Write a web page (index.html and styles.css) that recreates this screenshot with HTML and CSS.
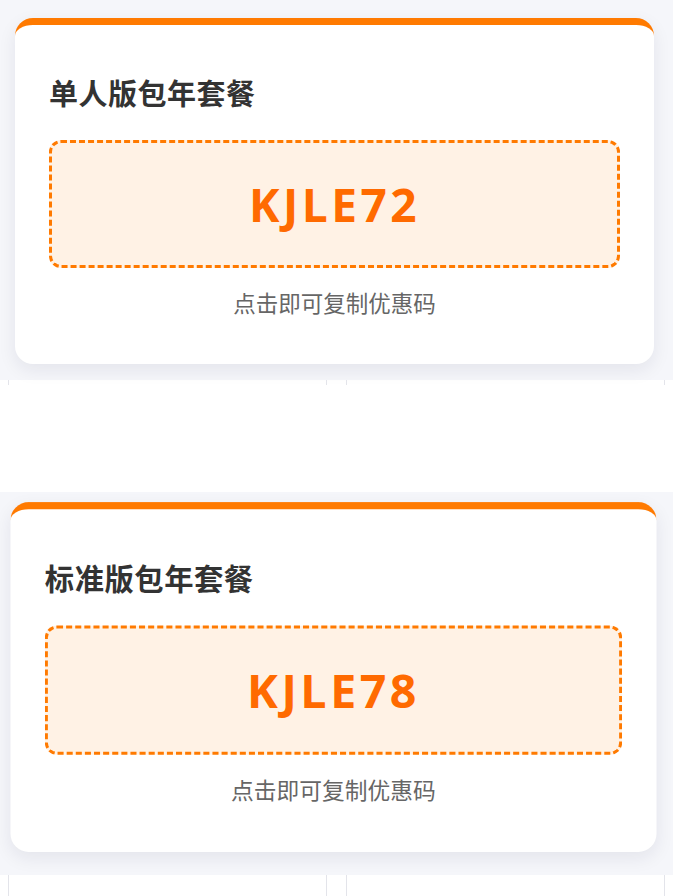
FILE: index.html
```html
<!DOCTYPE html>
<html lang="zh-CN">
<head>
<meta charset="UTF-8">
<meta name="viewport" content="width=device-width,initial-scale=1">
<title>优惠码</title>
<link rel="stylesheet" href="styles.css">
</head>
<body>

<!-- ---------- Coupon 1 ---------- -->
<section class="panel">
  <div class="card">
    <h2 class="card-title">单人版包年套餐</h2>
    <div class="code-box"><span class="code">KJLE72</span></div>
    <p class="hint">点击即可复制优惠码</p>
  </div>
</section>

<div class="grid-strip grid-strip--cut">
  <div class="cell"></div>
  <div class="cell"></div>
</div>

<!-- ---------- Coupon 2 ---------- -->
<section class="panel panel--tall">
  <div class="card card--hover">
    <h2 class="card-title">标准版包年套餐</h2>
    <div class="code-box"><span class="code">KJLE78</span></div>
    <p class="hint">点击即可复制优惠码</p>
  </div>
</section>

<div class="grid-strip">
  <div class="cell"></div>
  <div class="cell"></div>
</div>

</body>
</html>
```

FILE: styles.css
```css
/* ------------- BASE ------------- */
:root{
  --orange:#ff7a00;
  --code:#ff6a00;
  --code-bg:#fff2e5;
  --panel:#f5f6fa;
  --line:#e3e4ea;
}
*{box-sizing:border-box}
body{
  margin:0;background:#fff;
  font-family:"Open Sans","Noto Sans CJK SC",sans-serif;
}

/* Gray panel holding a card */
.panel{
  background:var(--panel);
  padding:18px 19px 16px 15px;
}
.panel--tall{padding-bottom:19px}

/* Card */
.card{
  background:#fff;
  border-top:7px solid var(--orange);
  border-radius:18px;
  padding:47px 34px 47px;
  box-shadow:0 6px 18px rgba(20,30,60,.08);
}
.card--hover{transform:translate(-1px,-6px) scale(1.011)}

.card-title{
  margin:0;font-size:29px;line-height:40px;font-weight:700;color:#333;
  letter-spacing:.5px;
  font-family:"Noto Sans CJK SC",sans-serif;
}

.code-box{
  margin-top:28px;height:128px;
  display:flex;justify-content:center;align-items:center;
  background:var(--code-bg);
  border:3px dashed var(--orange);border-radius:12px;
}
.code{
  font-size:46px;font-weight:700;color:var(--code);letter-spacing:3.5px;
}

.hint{
  margin:19px 0 0;text-align:center;
  font-size:22.5px;line-height:30px;color:#666;
  font-family:"Noto Sans CJK SC",sans-serif;
}

/* Page grid peeking between panels */
.grid-strip{
  display:grid;grid-template-columns:1fr 1fr;gap:19px;
  padding:0 8px;height:112px;
}
.grid-strip:last-child{height:21px}
.cell{border-left:1px solid var(--line);border-right:1px solid var(--line)}
.grid-strip--cut .cell{height:5px}
```
